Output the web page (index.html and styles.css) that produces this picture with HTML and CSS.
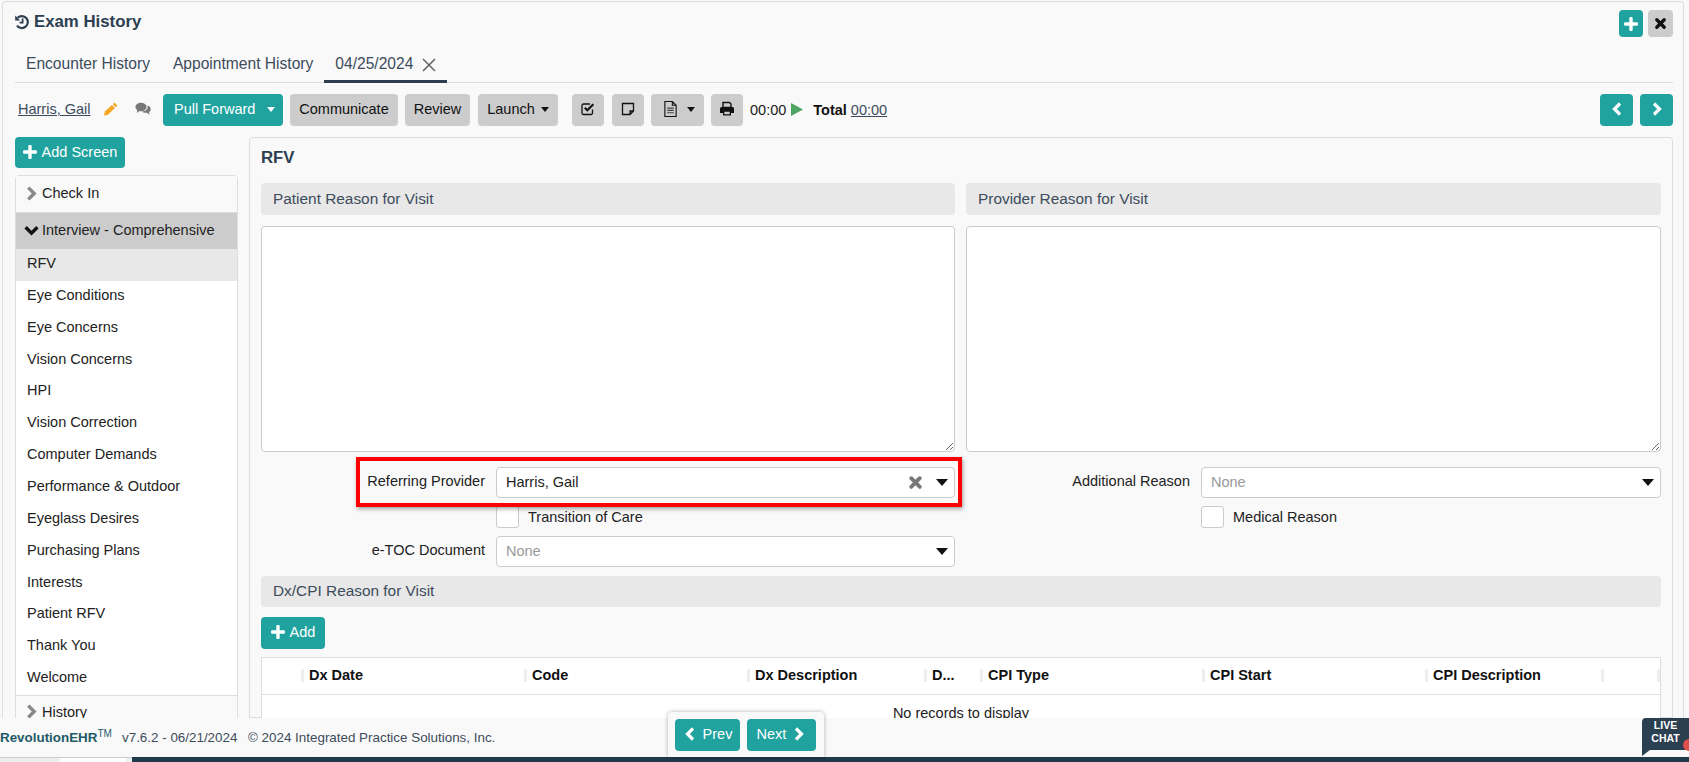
FILE: index.html
```html
<!DOCTYPE html>
<html lang="en">
<head>
  <meta charset="UTF-8" />
  <meta name="viewport" content="width=device-width, initial-scale=1.0" />
  <title>Exam History</title>
  <link rel="stylesheet" href="styles.css">
</head>
<body>
  <svg class="defs" aria-hidden="true">
    <symbol id="i-plus" viewBox="0 0 14 14"><path d="M7 1.5v11M1.5 7h11" fill="none" stroke="currentColor" stroke-width="3.4" stroke-linecap="round"/></symbol>
    <symbol id="i-times" viewBox="0 0 14 14"><path d="M3 3l8 8M11 3l-8 8" fill="none" stroke="currentColor" stroke-width="3.6" stroke-linecap="round"/></symbol>
    <symbol id="i-left" viewBox="0 0 14 14"><path d="M10 1.500L4.500 7l5.500 5.500" fill="none" stroke="currentColor" stroke-width="3.200"/></symbol>
    <symbol id="i-right" viewBox="0 0 14 14"><path d="M4 1.500L9.500 7 4 12.500" fill="none" stroke="currentColor" stroke-width="3.200"/></symbol>
    <symbol id="i-down" viewBox="0 0 14 14"><path d="M1.500 4L7 9.500 12.500 4" fill="none" stroke="currentColor" stroke-width="3.200"/></symbol>
  </svg>

  <div class="panel">
    <div class="panel-head">
      <h1 class="title">
        <svg class="ic-history" viewBox="0 0 16 16"><path d="M3.600 3.800A6 6 0 1 1 3 11.600" fill="none" stroke="currentColor" stroke-width="2.200"/><path d="M1.200 1.600v5h5z" fill="currentColor"/><path d="M8.600 4.600v4h-3" fill="none" stroke="currentColor" stroke-width="1.800"/></svg>
        Exam History
      </h1>
      <div class="head-btns">
        <button class="btn teal square"><svg class="ic"><use href="#i-plus"/></svg></button>
        <button class="btn grey square"><svg class="ic-sm"><use href="#i-times"/></svg></button>
      </div>
    </div>

    <div class="tabs">
      <a class="tab">Encounter History</a>
      <a class="tab">Appointment History</a>
      <a class="tab active">04/25/2024
        <svg class="tab-x" viewBox="0 0 14 14"><path d="M1 1l12 12M13 1L1 13" fill="none" stroke="currentColor" stroke-width="1.600"/></svg>
      </a>
    </div>

    <div class="toolbar">
      <a class="patient">Harris, Gail</a>
      <svg class="ic-pencil" viewBox="0 0 14 14"><path d="M10.500.600l2.900 2.900-1.700 1.700-2.900-2.900zM7.900 2.900l3 3-6.900 6.900-4 .8.800-4z" fill="#f5a623"/></svg>
      <svg class="ic-comments" viewBox="0 0 16 14"><ellipse cx="6" cy="5" rx="5.600" ry="4.200" fill="#777"/><path d="M2.600 7.500L1.600 11l3.600-2.400z" fill="#777"/><path d="M12.600 3.600c1.900.6 3.100 2 3.100 3.600 0 1.200-.7 2.300-1.800 3l.8 2.600-3-2c-2 .2-3.900-.3-5-1.400 3.600.3 6.600-2.100 5.900-5.800z" fill="#777"/></svg>

      <div class="split teal">
        <span class="split-main">Pull Forward</span>
        <span class="caret white"></span>
      </div>
      <button class="btn grey w-comm">Communicate</button>
      <button class="btn grey w-review">Review</button>
      <button class="btn grey launch">Launch <span class="caret"></span></button>

      <button class="btn grey icon-btn first-icon">
        <svg class="ic-tool" viewBox="0 0 16 16"><path d="M12.500 8.500v3.500a1.500 1.500 0 0 1-1.500 1.500H3.500A1.500 1.500 0 0 1 2 12V4.500A1.500 1.500 0 0 1 3.500 3H10" fill="none" stroke="#111" stroke-width="1.300"/><path d="M4.800 6.800l2.500 2.500 6-6" fill="none" stroke="#111" stroke-width="2.200"/></svg>
      </button>
      <button class="btn grey icon-btn note-btn">
        <svg class="ic-tool" viewBox="0 0 16 16"><path d="M2.500 2.500h11v7.500l-3.500 3.500H2.500zM13.500 10H10v3.500" fill="none" stroke="#111" stroke-width="1.300"/></svg>
      </button>
      <button class="btn grey doc-btn">
        <svg class="ic-doc" viewBox="0 0 16 18"><path d="M2 1h8l4 4v12H2zM10 1v4h4" fill="none" stroke="#111" stroke-width="1.200"/><path d="M4.500 8h7M4.500 10.500h7M4.500 13h7" stroke="#444" stroke-width="1.300"/></svg>
        <span class="caret"></span>
      </button>
      <button class="btn grey icon-btn">
        <svg class="ic-tool" viewBox="0 0 16 16"><path d="M4 1.500h6.500L12 3v3.500H4z" fill="none" stroke="#111" stroke-width="1.400"/><path d="M1 7.500a1.500 1.500 0 0 1 1.500-1.500h11A1.500 1.500 0 0 1 15 7.500V12h-3v2.500H4V12H1zM5.300 10.800v2.400h5.400v-2.400z" fill="#111" fill-rule="evenodd"/></svg>
      </button>

      <span class="time">00:00</span>
      <svg class="ic-play" viewBox="0 0 12 13"><path d="M0 0l12 6.500L0 13z" fill="#4fa463"/></svg>
      <strong class="total">Total</strong>
      <a class="total-time">00:00</a>

      <div class="nav-btns">
        <button class="btn teal nav"><svg class="ic"><use href="#i-left"/></svg></button>
        <button class="btn teal nav"><svg class="ic"><use href="#i-right"/></svg></button>
      </div>
    </div>

    <div class="body">
      <aside class="side">
        <button class="btn teal add-screen"><svg class="ic"><use href="#i-plus"/></svg> Add Screen</button>
        <div class="screens">
          <div class="group"><svg class="chev"><use href="#i-right"/></svg>Check In</div>
          <div class="group open"><svg class="chev"><use href="#i-down"/></svg>Interview - Comprehensive</div>
          <div class="item current">RFV</div>
          <div class="item">Eye Conditions</div>
          <div class="item">Eye Concerns</div>
          <div class="item">Vision Concerns</div>
          <div class="item">HPI</div>
          <div class="item">Vision Correction</div>
          <div class="item">Computer Demands</div>
          <div class="item">Performance &amp; Outdoor</div>
          <div class="item">Eyeglass Desires</div>
          <div class="item">Purchasing Plans</div>
          <div class="item">Interests</div>
          <div class="item">Patient RFV</div>
          <div class="item">Thank You</div>
          <div class="item">Welcome</div>
          <div class="group last"><svg class="chev"><use href="#i-right"/></svg>History</div>
        </div>
      </aside>

      <main class="main">
        <h2 class="main-title">RFV</h2>
        <div class="two-col">
          <div class="col">
            <div class="bar">Patient Reason for Visit</div>
            <textarea class="notes"></textarea>
          </div>
          <div class="col">
            <div class="bar">Provider Reason for Visit</div>
            <textarea class="notes"></textarea>
          </div>
        </div>

        <div class="two-col forms">
          <div class="form">
            <div class="field callout">
              <label class="lbl">Referring Provider</label>
              <div class="select">
                <span class="val">Harris, Gail</span>
                <svg class="clear"><use href="#i-times"/></svg>
                <span class="caret big"></span>
              </div>
            </div>
            <div class="check-row"><input type="checkbox" class="check" /><span>Transition of Care</span></div>
            <div class="field">
              <label class="lbl">e-TOC Document</label>
              <div class="select">
                <span class="val none">None</span>
                <span class="caret big"></span>
              </div>
            </div>
          </div>
          <div class="form">
            <div class="field">
              <label class="lbl">Additional Reason</label>
              <div class="select">
                <span class="val none">None</span>
                <span class="caret big"></span>
              </div>
            </div>
            <div class="check-row"><input type="checkbox" class="check" /><span>Medical Reason</span></div>
          </div>
        </div>

        <div class="bar dx-bar">Dx/CPI Reason for Visit</div>
        <button class="btn teal add"><svg class="ic"><use href="#i-plus"/></svg> Add</button>

        <div class="table">
          <div class="thead">
            <div class="th-blank"></div>
            <div class="th">Dx Date</div>
            <div class="th">Code</div>
            <div class="th">Dx Description</div>
            <div class="th">D...</div>
            <div class="th">CPI Type</div>
            <div class="th">CPI Start</div>
            <div class="th">CPI Description</div>
            <div class="th"></div>
            <div class="th"></div>
          </div>
          <div class="empty">No records to display</div>
        </div>
      </main>
    </div>
  </div>

  <footer class="footer">
    <span class="brand">RevolutionEHR<sup>TM</sup></span>
    <span class="version">v7.6.2 - 06/21/2024</span>
    <span class="copy">© 2024 Integrated Practice Solutions, Inc.</span>
  </footer>
  <div class="bottom">
    <div class="bottom-left"><span class="bottom-tab"></span></div>
  </div>

  <div class="pager">
    <button class="btn teal page"><svg class="ic"><use href="#i-left"/></svg> Prev</button>
    <button class="btn teal page">Next <svg class="ic"><use href="#i-right"/></svg></button>
  </div>

  <div class="chat">LIVE<br>CHAT<span class="chat-dot"></span></div>
</body>
</html>
```

FILE: styles.css
```css
* { box-sizing: border-box; }
html, body { margin: 0; height: 762px; overflow: hidden; }
body { font-family: "Liberation Sans", Arial, sans-serif; font-size: 14.5px; color: #222; background: #f9f9f9; display: flex; flex-direction: column; position: relative; }
.defs { display: none; }

.panel { flex: 1; min-height: 0; margin: 1px 5px 0 2px; padding: 8px 10px 0 12px; border: 1px solid #ddd; border-bottom: 0; border-radius: 4px 4px 0 0; background: #f9f9f9; display: flex; flex-direction: column; overflow: hidden; }
.panel-head { height: 27px; display: flex; justify-content: space-between; flex: none; }
.title { margin: 2px 0 0 -1px; font-size: 16.8px; line-height: 20px; font-weight: bold; color: #2c3e50; display: flex; align-items: center; gap: 4px; height: 20px; }
.ic-history { width: 16px; height: 16px; color: #2c3e50; }
.head-btns { display: flex; gap: 5px; }

.btn { border: 0; border-radius: 4px; font: inherit; height: 32px; padding: 0 0 2px; display: inline-flex; align-items: center; justify-content: center; color: #111; cursor: pointer; }
.btn.teal, .split.teal { background: #20a39f; color: #fff; }
.btn.grey { background: #ccc; }
.btn.square { height: 27px; padding: 0; }
.btn.square.teal { width: 24px; }
.btn.square.grey { width: 25px; }
.ic { width: 14px; height: 14px; flex: none; }
.ic-sm { width: 13px; height: 13px; }

.tabs { height: 46px; flex: none; display: flex; align-items: flex-end; border-bottom: 1px solid #ddd; }
.tab { font-size: 15.6px; line-height: 18px; color: #3d4c5c; padding: 3px 11px 7px 12px; height: 30px; display: flex; align-items: flex-start; gap: 9px; }
.tab:first-child { padding-left: 11px; padding-right: 11px; }
.tab.active { border-bottom: 3px solid #2c3e50; margin-bottom: -1px; height: 31px; padding-left: 11px; padding-right: 11px; }
.tab-x { width: 14px; height: 14px; margin-top: 3px; color: #666; }

.toolbar { height: 32px; margin: 11px 0; flex: none; display: flex; align-items: center; }
.patient { margin-left: 3px; color: #3d4c5c; text-decoration: underline; width: 73px; margin-top: -2px; }
.ic-pencil { width: 14px; height: 14px; margin-left: 13px; margin-top: -2px; }
.ic-comments { width: 16px; height: 14px; margin-left: 17px; margin-top: -2px; }
.split { height: 32px; width: 120px; margin-left: 12px; border-radius: 4px; display: flex; align-items: center; justify-content: space-between; padding: 0 8px 2px 11px; }
.toolbar > .btn { margin-left: 7px; }
.w-comm { width: 108px; }
.w-review { width: 65px; }
.toolbar > .launch { width: 80px; gap: 6px; margin-left: 8px; }
.toolbar > .first-icon { margin-left: 14px; }
.toolbar > .note-btn { margin-left: 8px; }
.icon-btn { width: 32px; }
.doc-btn { width: 53px; padding: 0 9px 2px 12px; justify-content: space-between; }
.ic-tool { width: 16px; height: 16px; }
.ic-doc { width: 15px; height: 18px; }
.caret { display: inline-block; width: 0; height: 0; border-left: 4.5px solid transparent; border-right: 4.5px solid transparent; border-top: 5px solid #111; }
.caret.white { border-top-color: #fff; }
.caret.big { border-left-width: 6px; border-right-width: 6px; border-top-width: 7px; }
.time { margin-left: 7px; margin-top: -1px; }
.ic-play { width: 12px; height: 13px; margin-left: 5px; margin-top: -2px; }
.total { margin-left: 10px; color: #111; margin-top: -1px; }
.total-time { margin-left: 4px; color: #3d4c5c; text-decoration: underline; margin-top: -1px; }
.nav-btns { margin-left: auto; display: flex; gap: 7px; }
.btn.nav { width: 33px; }

.body { flex: 1; min-height: 0; display: flex; gap: 11px; }
.side { width: 223px; flex: none; }
.add-screen { width: 110px; height: 31px; gap: 5px; margin-bottom: 7px; }
.screens { border: 1px solid #ddd; border-radius: 4px; background: #fff; }
.group { height: 37px; display: flex; align-items: center; padding: 0 0 2px 8px; gap: 3px; background: #f9f9f9; border-bottom: 1px solid #ddd; }
.group.open { background: #ccc; border-bottom: 0; height: 36px; }
.group.last { border-top: 1px solid #ddd; border-bottom: 0; padding-bottom: 5px; }
.chev { width: 15px; height: 15px; flex: none; color: #888; }
.group.open .chev { color: #111; }
.item { height: 31.86px; line-height: 29px; padding-left: 11px; }
.item.current { background: #e8e8e8; }

.main { flex: 1; min-width: 0; border: 1px solid #ddd; border-radius: 4px 4px 0 0; padding: 0 11px; background: #f9f9f9; }
.main-title { margin: 10px 0 16px; font-size: 16.8px; line-height: 19px; font-weight: bold; color: #2c3e50; }
.two-col { display: grid; grid-template-columns: 694px 1fr; gap: 11px; }
.bar { height: 32px; line-height: 31px; padding-left: 12px; border-radius: 4px; background: #e8e8e8; font-size: 15.4px; color: #3d4c5c; }
.notes { display: block; width: 100%; height: 226px; margin-top: 11px; border: 1px solid #ccc; border-radius: 4px; background: #fff; }

.forms { margin-top: 15px; height: 109px; }
.form { display: flex; flex-direction: column; }
.field { display: grid; grid-template-columns: 224px 1fr; column-gap: 11px; height: 31px; position: relative; }
.lbl { text-align: right; line-height: 28px; color: #222; }
.select { height: 31px; border: 1px solid #ccc; border-radius: 4px; background: #fff; display: flex; align-items: center; padding: 0 6px 0 9px; }
.val { flex: 1; margin-top: -1px; }
.val.none { color: #999; }
.clear { width: 15px; height: 15px; color: #777; margin-right: 13px; }
.check-row { margin: 8px 0 8px 235px; height: 22px; display: flex; align-items: center; gap: 9px; }
.check { appearance: none; margin: 0; width: 23px; height: 22px; border: 1px solid #ccc; border-radius: 3px; background: #fff; }
.callout::after { content: ""; position: absolute; left: 95px; right: -7px; top: -10px; bottom: -9px; border: 4px solid #f00; box-shadow: 1px 2px 4px rgba(0, 0, 0, 0.35); }

.dx-bar { height: 31px; line-height: 29px; }
.add { width: 64px; margin: 10px 0 8px; gap: 5px; display: flex; }

.table { border: 1px solid #ddd; background: #fff; height: 100px; }
.thead { height: 37px; display: grid; grid-template-columns: 39px 223px 223px 177px 56px 222px 223px 176px 56px 1fr; align-items: center; border-bottom: 1px solid #ddd; }
.th { height: 13px; line-height: 13px; border-left: 3px solid #eee; padding-left: 5px; font-weight: bold; color: #111; white-space: nowrap; overflow: visible; margin-top: -1px; }
.empty { text-align: center; margin-top: 10px; line-height: 16px; color: #222; }

.footer { height: 39px; flex: none; background: #f9f9f9; display: flex; align-items: center; font-size: 13.4px; color: #3d4c5c; position: relative; z-index: 1; }
.brand { width: 122px; font-weight: bold; color: #1f5a66; white-space: nowrap; }
.brand sup { font-size: 10px; font-weight: normal; line-height: 0; }
.version { width: 126px; }
.bottom { height: 5px; flex: none; background: #1f3a4a; position: relative; z-index: 1; }
.bottom-left { width: 132px; height: 5px; background: #eee; border-top: 1px solid #ccc; }
.bottom-tab { display: block; width: 66px; height: 4px; margin-left: 60px; background: #fff; }

.pager { position: absolute; left: 668px; top: 712px; width: 156px; height: 45px; padding: 7px 7px 0; display: flex; gap: 7px; background: #f9f9f9; border-radius: 4px 4px 0 0; box-shadow: 0 0 4px rgba(0, 0, 0, 0.3); z-index: 2; }
.page { flex: none; width: 65px; gap: 6px; }
.page + .page { width: 69px; }

.chat { position: absolute; left: 1642px; top: 718px; width: 47px; height: 32px; padding-top: 1px; background: #2a3f50; border-radius: 4px 0 0 0; color: #fff; font-size: 10.5px; line-height: 12.5px; font-weight: bold; text-align: center; z-index: 3; }
.chat::after { content: ""; position: absolute; left: 0; top: 32px; border-top: 6px solid #2a3f50; border-right: 8px solid transparent; }
.chat-dot { position: absolute; right: -6px; top: 21px; width: 12px; height: 12px; border-radius: 50%; background: #e0504a; }
```
